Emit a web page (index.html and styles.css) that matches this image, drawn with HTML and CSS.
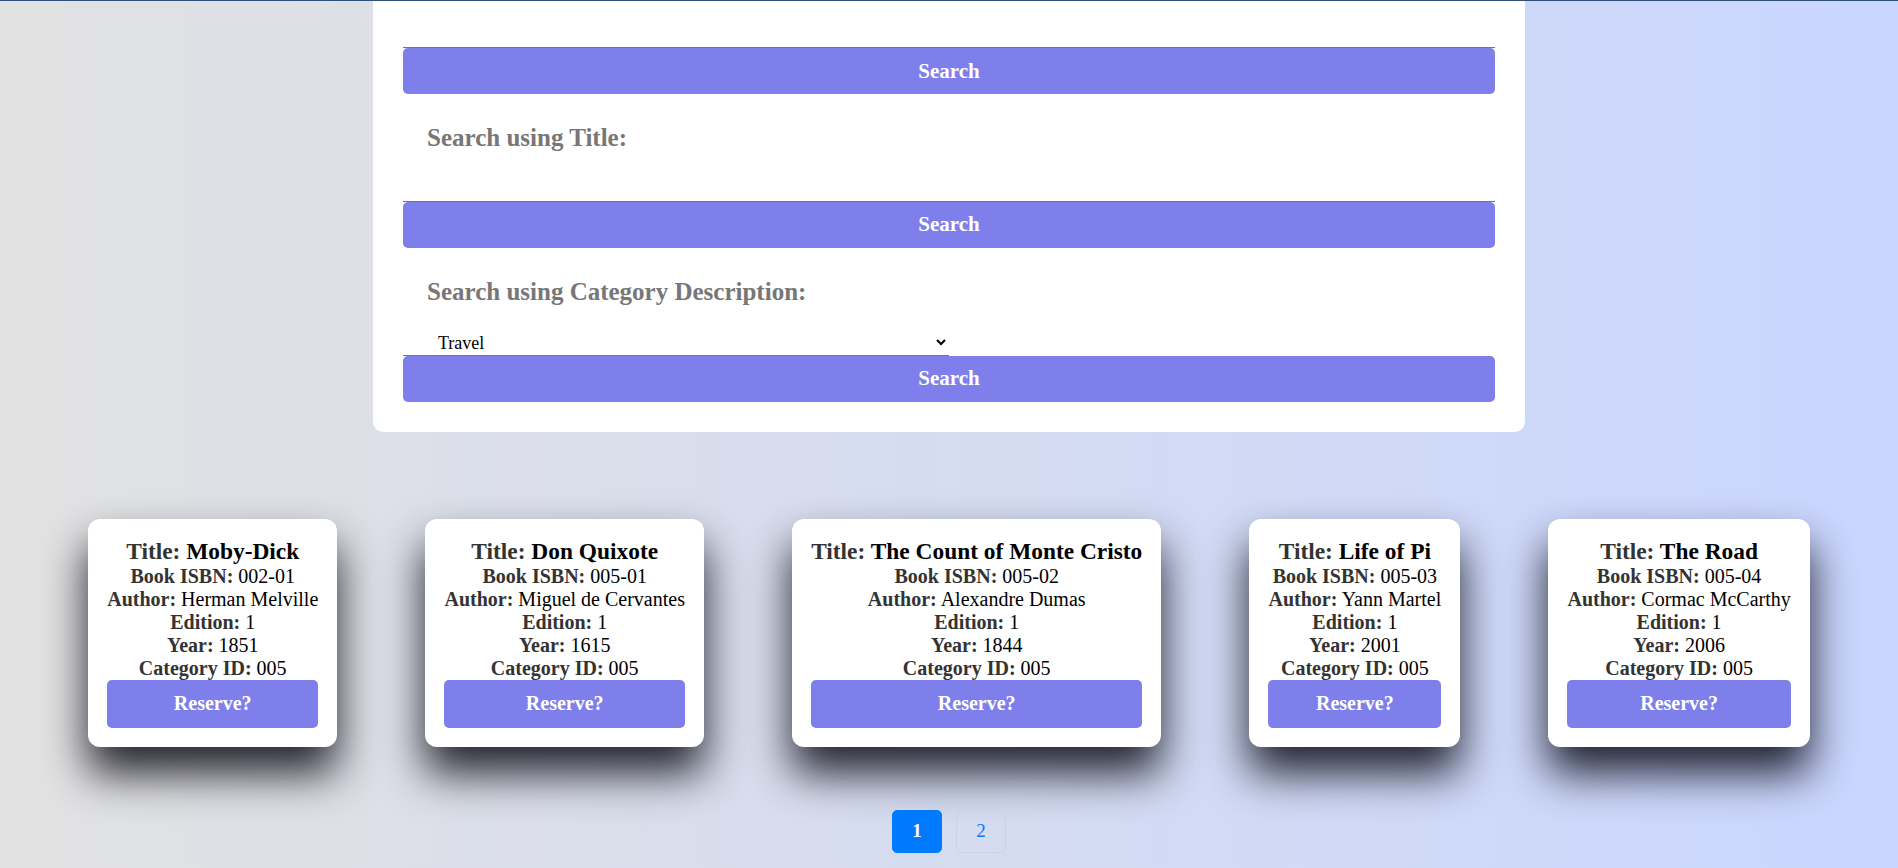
FILE: index.html
```html
<!DOCTYPE html>
<html lang="en">
<head>
<meta charset="utf-8">
<title>Library Search</title>
<link rel="stylesheet" href="styles.css">
</head>
<body>
<div class="topbar"></div>
<main class="page">
  <section class="panel">
    <form class="search-group">
      <input class="field" type="text" aria-label="Search using ISBN">
      <button class="search-btn" type="button">Search</button>
    </form>
    <form class="search-group">
      <h2 class="search-label">Search using Title:</h2>
      <input class="field" type="text" aria-label="Title">
      <button class="search-btn" type="button">Search</button>
    </form>
    <form class="search-group">
      <h2 class="search-label">Search using Category Description:</h2>
      <select class="select-field" aria-label="Category">
        <option>Travel</option>
      </select>
      <button class="search-btn" type="button">Search</button>
    </form>
  </section>

  <section class="cards">
    <article class="card">
      <h3 class="card-title">Title: <span class="val">Moby-Dick</span></h3>
      <p><strong>Book ISBN:</strong> 002-01</p>
      <p><strong>Author:</strong> Herman Melville</p>
      <p><strong>Edition:</strong> 1</p>
      <p><strong>Year:</strong> 1851</p>
      <p><strong>Category ID:</strong> 005</p>
      <button class="reserve-btn" type="button">Reserve?</button>
    </article>
    <article class="card">
      <h3 class="card-title">Title: <span class="val">Don Quixote</span></h3>
      <p><strong>Book ISBN:</strong> 005-01</p>
      <p><strong>Author:</strong> Miguel de Cervantes</p>
      <p><strong>Edition:</strong> 1</p>
      <p><strong>Year:</strong> 1615</p>
      <p><strong>Category ID:</strong> 005</p>
      <button class="reserve-btn" type="button">Reserve?</button>
    </article>
    <article class="card">
      <h3 class="card-title">Title: <span class="val">The Count of Monte Cristo</span></h3>
      <p><strong>Book ISBN:</strong> 005-02</p>
      <p><strong>Author:</strong> Alexandre Dumas</p>
      <p><strong>Edition:</strong> 1</p>
      <p><strong>Year:</strong> 1844</p>
      <p><strong>Category ID:</strong> 005</p>
      <button class="reserve-btn" type="button">Reserve?</button>
    </article>
    <article class="card">
      <h3 class="card-title">Title: <span class="val">Life of Pi</span></h3>
      <p><strong>Book ISBN:</strong> 005-03</p>
      <p><strong>Author:</strong> Yann Martel</p>
      <p><strong>Edition:</strong> 1</p>
      <p><strong>Year:</strong> 2001</p>
      <p><strong>Category ID:</strong> 005</p>
      <button class="reserve-btn" type="button">Reserve?</button>
    </article>
    <article class="card">
      <h3 class="card-title">Title: <span class="val">The Road</span></h3>
      <p><strong>Book ISBN:</strong> 005-04</p>
      <p><strong>Author:</strong> Cormac McCarthy</p>
      <p><strong>Edition:</strong> 1</p>
      <p><strong>Year:</strong> 2006</p>
      <p><strong>Category ID:</strong> 005</p>
      <button class="reserve-btn" type="button">Reserve?</button>
    </article>
  </section>

  <nav class="pagination">
    <a class="page-link active" href="#">1</a>
    <a class="page-link" href="#">2</a>
  </nav>
</main>
</body>
</html>
```

FILE: styles.css
```css
* {
  box-sizing: border-box;
}

html, body {
  margin: 0;
  padding: 0;
}

body {
  min-height: 868px;
  font-family: "Liberation Serif", "Times New Roman", serif;
  background: linear-gradient(to right, #e2e2e2, #c9d6ff);
  overflow: hidden;
}

.topbar {
  height: 1px;
  background: #2f5078;
}

.page {
  display: flex;
  flex-direction: column;
}

.panel {
  width: 1152px;
  margin: 0 auto;
  background: #ffffff;
  border-radius: 0 0 10px 10px;
  padding: 17px 30px 30px;
}

.search-group {
  display: flex;
  flex-direction: column;
  margin: 0;
}

.search-label {
  margin: 30px 0 0 24px;
  font-size: 25px;
  font-weight: bold;
  color: #777777;
  line-height: 28.75px;
}

.field {
  display: block;
  width: 100%;
  height: 30px;
  margin-top: 19px;
  border: none;
  border-bottom: 1px solid #767676;
  background: transparent;
  font-family: inherit;
  font-size: 18px;
  outline: none;
}

.search-group:first-child .field {
  margin-top: 0;
}

.select-field {
  display: block;
  width: 50%;
  height: 27px;
  margin-top: 22px;
  border: none;
  border-bottom: 1px solid #767676;
  border-radius: 0;
  background: transparent;
  padding: 3px 8px 0 31px;
  font-family: "Liberation Serif", "Times New Roman", serif;
  font-size: 18px;
  color: #000;
}

.search-btn {
  display: block;
  width: 100%;
  height: 46px;
  border: none;
  border-radius: 5px;
  background: #7e7fea;
  color: #ffffff;
  font-family: inherit;
  font-size: 21px;
  font-weight: bold;
  cursor: pointer;
}

.cards {
  display: flex;
  justify-content: space-evenly;
  align-items: flex-start;
  margin-top: 87px;
}

.card {
  background: #ffffff;
  border-radius: 12px;
  padding: 19px;
  text-align: center;
  font-size: 20px;
  color: #000;
  box-shadow: 0 26px 44px rgba(0, 0, 10, 0.85);
}

.card-title {
  margin: 0;
  font-size: 23.4px;
  font-weight: bold;
  color: #333333;
}

.card-title .val {
  color: #000000;
}

.card p {
  margin: 0;
}

.card strong {
  color: #333333;
}

.reserve-btn {
  display: block;
  width: 100%;
  height: 48px;
  border: none;
  border-radius: 5px;
  background: #7e7fea;
  color: #ffffff;
  font-family: inherit;
  font-size: 20px;
  font-weight: bold;
  cursor: pointer;
}

.pagination {
  display: flex;
  justify-content: center;
  gap: 14px;
  margin-top: 63px;
}

.page-link {
  display: flex;
  align-items: center;
  justify-content: center;
  width: 50px;
  height: 43px;
  border: 1px solid rgba(200, 205, 215, 0.6);
  border-radius: 5px;
  color: #007bff;
  font-size: 19px;
  text-decoration: none;
}

.page-link.active {
  background: #007bff;
  border-color: #007bff;
  color: #ffffff;
  font-weight: bold;
}
```
